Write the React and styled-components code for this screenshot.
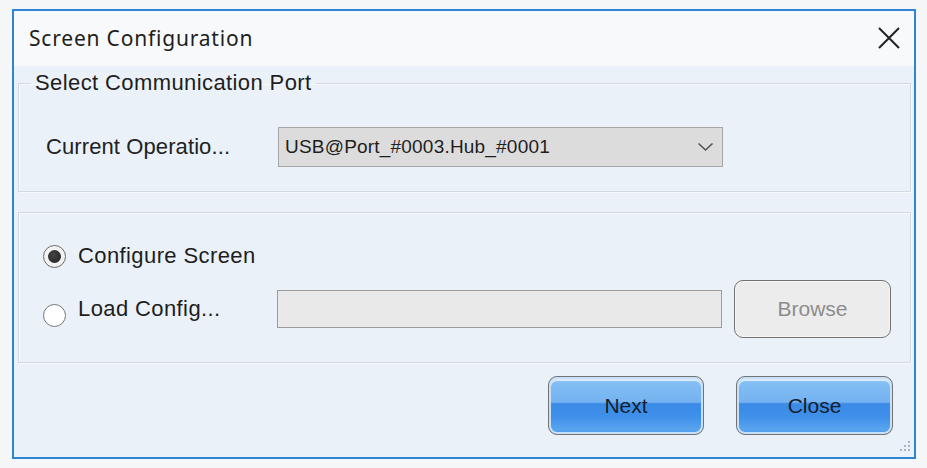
import styled, { createGlobalStyle } from "styled-components";

const GlobalStyle = createGlobalStyle`
  html, body {
    margin: 0;
    padding: 0;
    background-color: #f5f6f8;
  }
  body {
    font-family: "Liberation Sans", Arial, sans-serif;
    color: #1c1c1c;
  }
`;

const Page = styled.div`
  padding: 9px 0 0 12px;
`;

const Window = styled.div`
  position: relative;
  box-sizing: border-box;
  width: 904px;
  height: 450px;
  border: 2px solid #2f84d4;
  background-color: #eaf1f8;
  display: flex;
  flex-direction: column;
`;

const TitleBar = styled.div`
  height: 55px;
  display: flex;
  align-items: center;
  justify-content: space-between;
  padding: 0 13px 0 15px;
  background-color: #f8f9fa;
`;

const Title = styled.span`
  font-family: "Noto Sans", "Open Sans", sans-serif;
  font-size: 21px;
  letter-spacing: 0.8px;
  color: #1e1e1e;
  margin-top: -2px;
`;

const CloseIcon = styled.svg`
  width: 24px;
  height: 24px;
  margin-top: -2px;
`;

const Body = styled.div`
  flex: 1;
  display: flex;
  flex-direction: column;
  padding: 0 3px 0 4px;
`;

const Group = styled.fieldset`
  margin: ${(props) => props.$top || 0}px 0 0;
  padding: ${(props) => props.$pad};
  border: 1px solid #d2d9e1;
  box-shadow: inset 1px 1px 0 #f7f9fc, 1px 1px 0 #f7f9fc;
  min-width: 0;
`;

const Legend = styled.legend`
  margin-left: 12px;
  padding: 0 4px;
  font-size: 22px;
  line-height: 26px;
  letter-spacing: 0.4px;
  color: #1e1e1e;
`;

const Row = styled.div`
  display: flex;
  align-items: center;
  height: ${(props) => props.$h}px;
  margin-top: ${(props) => props.$mt || 0}px;
`;

const FieldLabel = styled.span`
  width: 232px;
  padding-left: 27px;
  font-size: 22px;
  letter-spacing: 0.1px;
  color: #222;
`;

const Combo = styled.div`
  box-sizing: border-box;
  width: 445px;
  height: 40px;
  display: flex;
  align-items: center;
  justify-content: space-between;
  padding: 0 8px 0 6px;
  background-color: #dcdcdc;
  border: 1px solid #a6a6a6;
  font-size: 19px;
  letter-spacing: 0.2px;
  color: #1e1e1e;
`;

const Chevron = styled.svg`
  width: 17px;
  height: 10px;
`;

const Choices = styled.div`
  display: grid;
  grid-template-rows: 40px 58px;
  row-gap: 4px;
`;

const Choice = styled.label`
  display: flex;
  align-items: center;
  width: ${(props) => (props.$fixed ? "234px" : "auto")};
  padding-left: 24px;
  font-size: 22px;
  letter-spacing: 0.4px;
  color: #1e1e1e;
`;

const Radio = styled.span`
  box-sizing: border-box;
  width: 23px;
  height: 23px;
  margin-right: 12px;
  margin-top: ${(props) => (props.$checked ? 0 : 12)}px;
  border-radius: 50%;
  border: 1.5px solid ${(props) => (props.$checked ? "#6a6a6a" : "#777")};
  background-color: ${(props) => (props.$checked ? "#f2f2f2" : "#ffffff")};
  display: flex;
  align-items: center;
  justify-content: center;
  flex-shrink: 0;
  &::after {
    content: "";
    display: ${(props) => (props.$checked ? "block" : "none")};
    width: 13px;
    height: 13px;
    border-radius: 50%;
    background: radial-gradient(circle at 40% 40%, #444, #1f1f1f);
  }
`;

const PathInput = styled.div`
  box-sizing: border-box;
  width: 445px;
  height: 38px;
  background-color: #e9e9e9;
  border: 1.5px solid #9c9c9c;
`;

const Button = styled.button`
  box-sizing: border-box;
  width: ${(props) => props.$w || 157}px;
  height: ${(props) => props.$h || 58}px;
  border-radius: 9px;
  border: 1.5px solid #737373;
  font-family: "Liberation Sans", Arial, sans-serif;
  font-size: 21px;
  padding: 0;
  cursor: pointer;
  color: ${(props) => (props.$primary ? "#14202c" : "#8c8c8c")};
  background: ${(props) =>
    props.$primary
      ? "linear-gradient(180deg, #9cccf6 0%, #82bdf3 12%, #74b3f1 44%, #3b8be6 47%, #3f90ea 70%, #5aa4ef 92%, #4a97ea 100%)"
      : "#ececec"};
  box-shadow: ${(props) =>
    props.$primary
      ? "inset 0 0 0 2px #c9e1f8, inset 0 2px 0 2px #d9ebfb"
      : "inset 0 0 0 1px #f6f6f6"};
`;

const Browse = styled(Button)`
  margin-left: 12px;
`;

const Footer = styled.div`
  display: flex;
  justify-content: flex-end;
  gap: 32px;
  padding: 13px 18px 0 0;
`;

const Grip = styled.svg`
  position: absolute;
  right: 2px;
  bottom: 2px;
  width: 16px;
  height: 16px;
`;

const gripDots = [
  [12, 2],
  [8, 6],
  [12, 6],
  [4, 10],
  [8, 10],
  [12, 10],
];

export default function App() {
  return (
    <>
      <GlobalStyle />
      <Page>
        <Window>
          <TitleBar>
            <Title>Screen Configuration</Title>
            <CloseIcon viewBox="0 0 24 24">
              <path
                d="M2 2 L22 22 M22 2 L2 22"
                stroke="#222"
                strokeWidth="2"
                fill="none"
              />
            </CloseIcon>
          </TitleBar>
          <Body>
            <Group $top={4} $pad="4px 0 24px 0">
              <Legend>Select Communication Port</Legend>
              <Row $h={40} $mt={27}>
                <FieldLabel>Current Operatio...</FieldLabel>
                <Combo>
                  <span>USB@Port_#0003.Hub_#0001</span>
                  <Chevron viewBox="0 0 17 10">
                    <path
                      d="M1.5 1.5 L8.5 8 L15.5 1.5"
                      stroke="#555"
                      strokeWidth="1.6"
                      fill="none"
                    />
                  </Chevron>
                </Combo>
              </Row>
            </Group>
            <Group $top={20} $pad="23px 0 24px 0">
              <Choices>
                <Row $h={40}>
                  <Choice>
                    <Radio $checked />
                    Configure Screen
                  </Choice>
                </Row>
                <Row $h={58}>
                  <Choice $fixed>
                    <Radio />
                    Load Config...
                  </Choice>
                  <PathInput />
                  <Browse>Browse</Browse>
                </Row>
              </Choices>
            </Group>
            <Footer>
              <Button $primary $w={156} $h={59}>
                Next
              </Button>
              <Button $primary $h={59}>
                Close
              </Button>
            </Footer>
          </Body>
          <Grip viewBox="0 0 16 16">
            {gripDots.map(([x, y]) => (
              <rect key={`${x}-${y}`} x={x} y={y} width="2" height="2" fill="#a9b4bf" />
            ))}
          </Grip>
        </Window>
      </Page>
    </>
  );
}
